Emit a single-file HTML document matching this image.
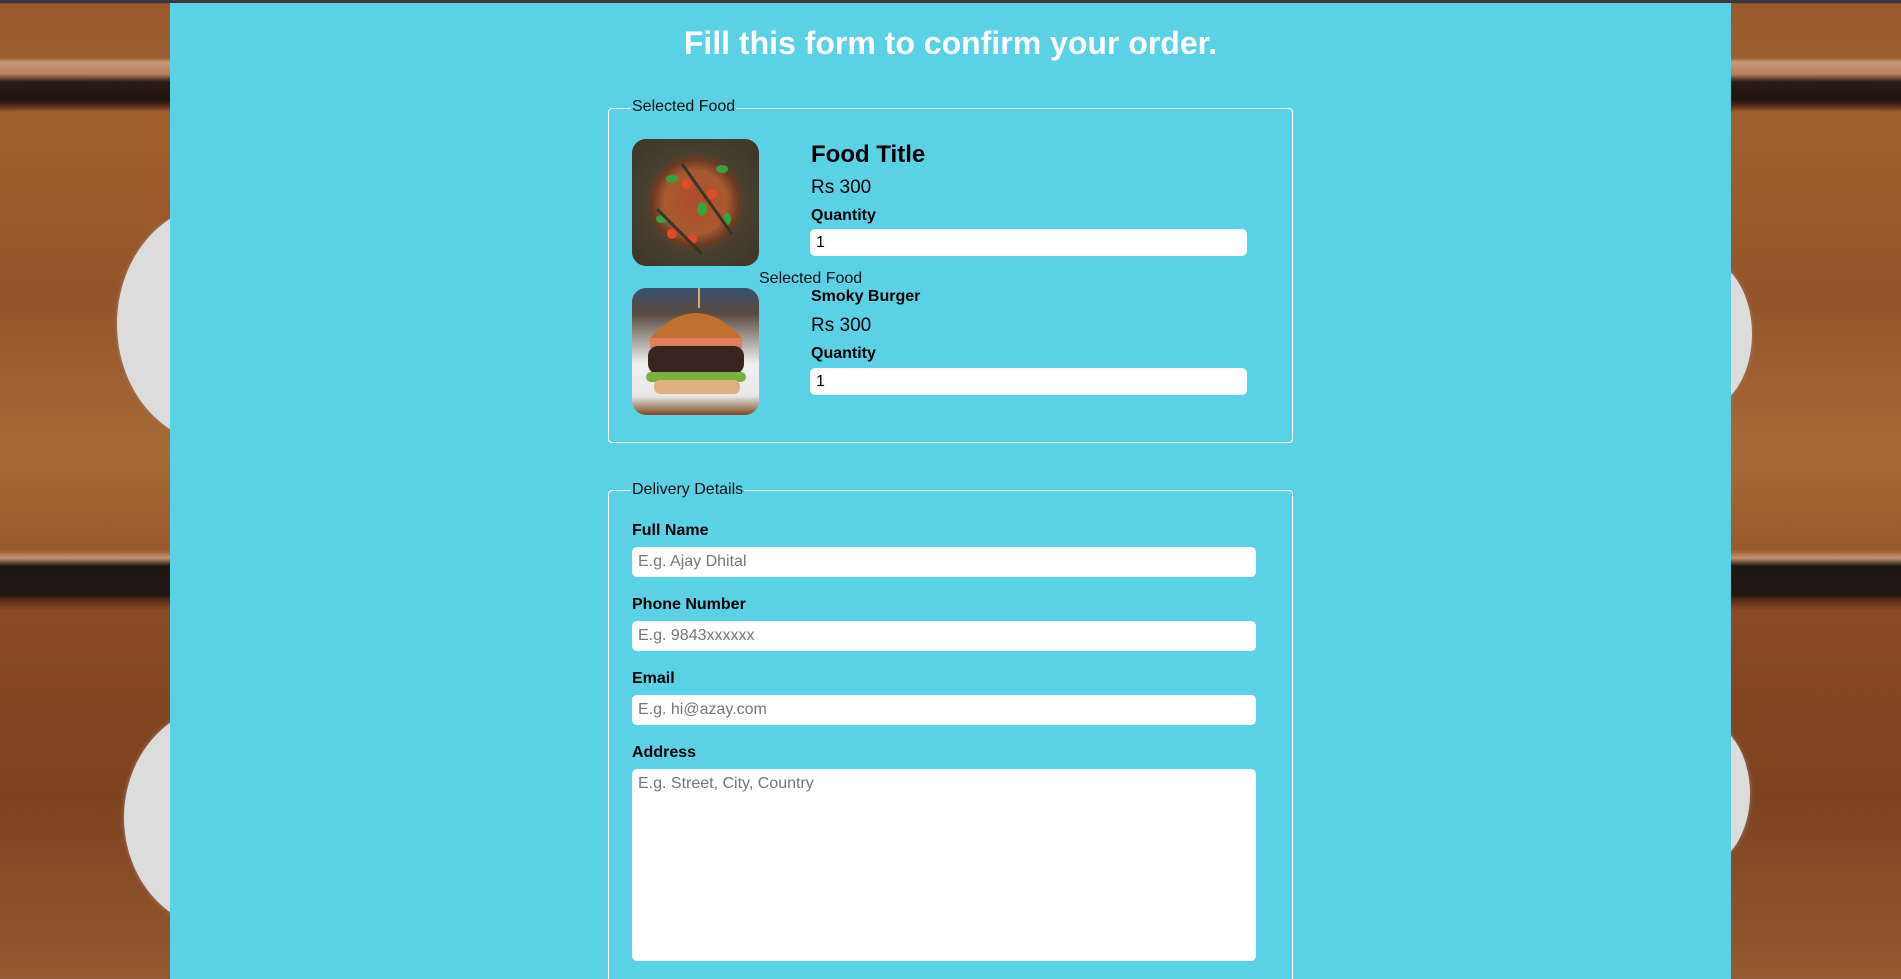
<!DOCTYPE html>
<html><head><meta charset="utf-8"><style>
*{box-sizing:border-box;margin:0;padding:0}
html,body{width:1901px;height:979px;overflow:hidden}
body{position:relative;font-family:"Liberation Sans",Arial,sans-serif;
background:linear-gradient(to bottom,#3a3440 0,#3a3440 3px,#9a5a2c 3px,#9c5e30 58px,#c79878 62px,#b88060 74px,#2a1a14 82px,#1e1512 100px,#5a2a18 106px,#a0602e 112px,#94542a 300px,#a86a38 450px,#9a5a2c 550px,#c49070 558px,#1e1512 566px,#231814 595px,#5a2a18 600px,#8a4a24 610px,#7e4220 800px,#955a30 979px);}
.plate{position:absolute;background:#dcdcdc;border-radius:50%;box-shadow:0 0 4px #a08070}
.panel{position:absolute;left:170px;top:3px;width:1561px;height:976px;background:#5ad1e4}
h1{position:absolute;left:0;width:100%;top:22px;text-align:center;color:#fff;font-size:32px;font-weight:bold}
.fs{position:absolute;border:1px solid #fff;border-radius:4px}
.lg{position:absolute;font-size:16px;color:#111;background:#5ad1e4;padding:0 1px;line-height:18px}
.t{position:absolute;color:#000;white-space:nowrap}
.in{position:absolute;background:#fff;border-radius:5px;font-size:16px;padding-left:6px;display:flex;align-items:center}
.ph{color:#777}
.img{position:absolute;width:127px;height:127px;border-radius:14px;overflow:hidden}
</style></head><body>
<div class="plate" style="left:117px;top:205px;width:200px;height:238px"></div>
<div class="plate" style="left:124px;top:705px;width:200px;height:225px"></div>
<div class="plate" style="left:1650px;top:258px;width:102px;height:152px"></div>
<div class="plate" style="left:1650px;top:720px;width:100px;height:147px"></div>
<div class="panel">
<h1>Fill this form to confirm your order.</h1>
</div>
<div class="fs" style="left:608px;top:108px;width:685px;height:335px"></div>
<div class="lg" style="left:631px;top:98px">Selected Food</div>
<div class="img" style="left:632px;top:139px;background:radial-gradient(circle at 50% 50%,#b04a2a 0,#a85a30 35%,#6a3a22 48%,#4a4030 55%,#3a3428 100%)">
<svg width="128" height="128"><g fill="#3aa040"><ellipse cx="40" cy="40" rx="6" ry="4"/><ellipse cx="90" cy="30" rx="6" ry="4"/><ellipse cx="70" cy="70" rx="5" ry="7"/><ellipse cx="30" cy="80" rx="6" ry="4"/><ellipse cx="95" cy="80" rx="4" ry="6"/></g><g fill="#e04a2a"><circle cx="55" cy="45" r="5"/><circle cx="80" cy="55" r="5"/><circle cx="40" cy="95" r="5"/><circle cx="60" cy="100" r="5"/></g><path d="M50 25 L100 95 M25 70 L70 115" stroke="#3a3428" stroke-width="3"/></svg></div>
<div class="t" style="left:811px;top:141px;font-size:24px;font-weight:bold">Food Title</div>
<div class="t" style="left:811px;top:177px;font-size:19px">Rs 300</div>
<div class="t" style="left:811px;top:207px;font-size:16px;font-weight:bold">Quantity</div>
<div class="in" style="left:810px;top:229px;width:437px;height:27px">1</div>
<div class="t" style="left:759px;top:270px;font-size:16px;color:#111">Selected Food</div>
<div class="img" style="left:632px;top:288px;background:linear-gradient(#3a5070 0,#5a4a40 20%,#f0f0f0 60%,#e8e8e8 85%,#7a4a24 100%)">
<svg width="128" height="128"><path d="M18 50 Q64 0 110 50 Z" fill="#c07030"/><rect x="18" y="50" width="92" height="10" fill="#e08060"/><rect x="16" y="58" width="96" height="28" rx="10" fill="#3a2420"/><rect x="14" y="84" width="100" height="10" rx="5" fill="#7ab040"/><rect x="22" y="92" width="86" height="14" rx="6" fill="#e0b080"/><line x1="67" y1="0" x2="67" y2="20" stroke="#d0b060" stroke-width="2"/></svg></div>
<div class="t" style="left:811px;top:288px;font-size:16px;font-weight:bold">Smoky Burger</div>
<div class="t" style="left:811px;top:315px;font-size:19px">Rs 300</div>
<div class="t" style="left:811px;top:345px;font-size:16px;font-weight:bold">Quantity</div>
<div class="in" style="left:810px;top:368px;width:437px;height:27px">1</div>

<div class="fs" style="left:608px;top:490px;width:685px;height:520px"></div>
<div class="lg" style="left:631px;top:481px">Delivery Details</div>
<div class="t" style="left:632px;top:522px;font-size:16px;font-weight:bold">Full Name</div>
<div class="in" style="left:632px;top:547px;width:624px;height:30px"><span class="ph">E.g. Ajay Dhital</span></div>
<div class="t" style="left:632px;top:596px;font-size:16px;font-weight:bold">Phone Number</div>
<div class="in" style="left:632px;top:621px;width:624px;height:30px"><span class="ph">E.g. 9843xxxxxx</span></div>
<div class="t" style="left:632px;top:670px;font-size:16px;font-weight:bold">Email</div>
<div class="in" style="left:632px;top:695px;width:624px;height:30px"><span class="ph">E.g. hi@azay.com</span></div>
<div class="t" style="left:632px;top:744px;font-size:16px;font-weight:bold">Address</div>
<div class="in" style="left:632px;top:769px;width:624px;height:192px;align-items:flex-start;padding-top:6px"><span class="ph">E.g. Street, City, Country</span></div>
</body></html>
